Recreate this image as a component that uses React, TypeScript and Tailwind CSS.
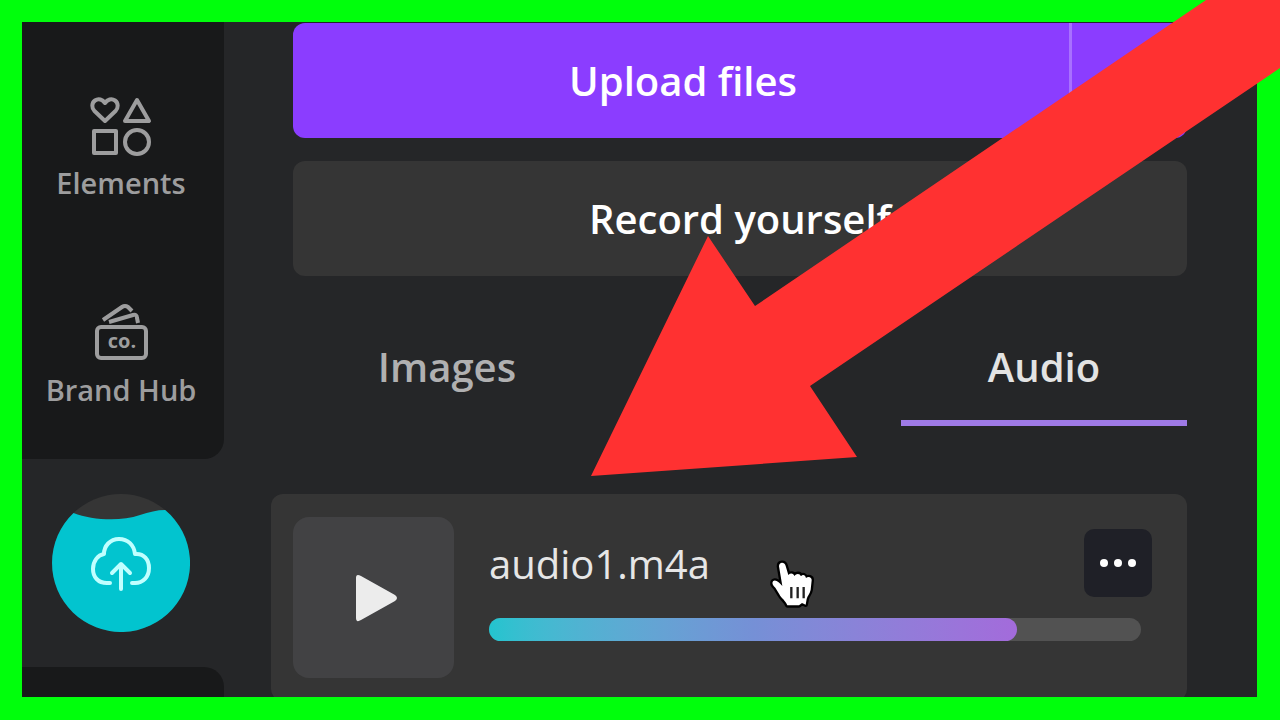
interface SidebarItemProps {
	label: string;
	children: React.ReactNode;
}

function SidebarItem({ label, children }: SidebarItemProps) {
	return (
		<button
			type="button"
			className="flex w-full flex-col items-center gap-2 text-[29px] leading-9 font-semibold text-[#9d9d9e]"
		>
			{children}
			<span className="whitespace-nowrap">{label}</span>
		</button>
	);
}

function ElementsIcon() {
	return (
		<svg
			width="64"
			height="64"
			viewBox="0 0 64 64"
			fill="none"
			stroke="currentColor"
			strokeWidth="4"
			strokeLinejoin="round"
		>
			<path d="M16 28 L5.5 18 C2.5 15 2.5 10 6 7.5 C9.5 5 13.5 6.5 16 10 C18.5 6.5 22.5 5 26 7.5 C29.5 10 29.5 15 26.5 18 Z" />
			<path d="M48 7 L60 28 H36 Z" />
			<rect x="5" y="38" width="22" height="22" />
			<circle cx="48" cy="49" r="12" />
		</svg>
	);
}

function BrandIcon() {
	return (
		<svg width="64" height="64" viewBox="0 0 64 64" fill="none" stroke="currentColor">
			<rect x="8" y="27" width="49" height="31" rx="4" strokeWidth="4" />
			<path
				d="M14 20 L33 7 Q36 5 39 7 L43 11"
				strokeWidth="4"
				strokeLinejoin="round"
			/>
			<path d="M20 22 L44 15 Q48 14 48 18 L49 23" strokeWidth="4" />
			<text
				x="33"
				y="48"
				textAnchor="middle"
				fontSize="20"
				fontWeight="700"
				fill="currentColor"
				stroke="none"
			>
				co.
			</text>
		</svg>
	);
}

function UploadsIcon() {
	return (
		<svg width="138" height="138" viewBox="0 0 138 138">
			<circle cx="69" cy="69" r="69" fill="#353535" />
			<path
				d="M21.5 19 C40 26 68 28 88 21 C97 18 105 16 113.2 16 A69 69 0 1 1 21.5 19 Z"
				fill="#02c4cf"
			/>
			<g
				fill="none"
				stroke="#c0ffff"
				strokeWidth="4"
				strokeLinecap="round"
				strokeLinejoin="round"
			>
				<path d="M58 89 H55 C46 89 41 83 41 75 C41 67 46 61 52 60 C52 52 58 45 67 45 C76 45 82 51 83 60 C92 59 97 66 97 74 C97 83 91 89 83 89 H80" />
				<path d="M69 95 V71 M60 79 L69 70 L78 79" />
			</g>
		</svg>
	);
}

function Sidebar() {
	return (
		<nav className="flex w-[202px] shrink-0 flex-col">
			<div className="flex flex-col gap-[99px] rounded-br-[20px] bg-[#18191a] pt-[71px] pr-1 pb-[51px]">
				<SidebarItem label="Elements">
					<ElementsIcon />
				</SidebarItem>
				<SidebarItem label="Brand Hub">
					<BrandIcon />
				</SidebarItem>
			</div>
			<button type="button" aria-label="Uploads" className="my-[35px] flex justify-center pr-1">
				<UploadsIcon />
			</button>
			<div className="grow rounded-tr-[20px] bg-[#18191a]" />
		</nav>
	);
}

function AudioCard() {
	return (
		<div className="mt-[68px] flex h-[207px] shrink-0 gap-[35px] rounded-xl bg-[#353535] py-[23px] pr-[46px] pl-[22px]">
			<button
				type="button"
				aria-label="Play"
				className="flex size-[161px] shrink-0 items-center justify-center rounded-2xl bg-[#424244]"
			>
				<svg width="48" height="48" viewBox="0 0 48 48" className="text-[#ececec]">
					<path
						d="M6 4 Q6 -1 11 2 L45 21 Q49 24 45 27 L11 46 Q6 49 6 44 Z"
						fill="currentColor"
					/>
				</svg>
			</button>
			<div className="min-w-0 grow">
				<div className="flex items-start justify-between pt-3">
					<p className="text-[40px] leading-[70px] text-[#e6e6e6]">audio1.m4a</p>
					<button
						type="button"
						aria-label="More options"
						className="-mr-[11px] flex size-[68px] items-center justify-center gap-[6px] rounded-[10px] bg-[#1f2027]"
					>
						<span className="size-2 rounded-full bg-white" />
						<span className="size-2 rounded-full bg-white" />
						<span className="size-2 rounded-full bg-white" />
					</button>
				</div>
				<div className="mt-[19px] h-[23px] rounded-full bg-[#525252]">
					<div className="h-full w-[81%] rounded-full bg-linear-to-r from-[#22c4cf] via-[#7590d6] to-[#a36bdb]" />
				</div>
			</div>
		</div>
	);
}

function Overlay() {
	return (
		<svg
			viewBox="0 0 1280 720"
			preserveAspectRatio="none"
			className="pointer-events-none absolute inset-0 h-full w-full"
		>
			<path
				d="M591 476 L708 236 L755 306 L1206 0 H1280 V68 L810 386 L857 457 Z"
				fill="#ff3131"
			/>
			{/* hand cursor */}
			<g transform="translate(760 551) scale(0.3333)">
				<path
					d="M57 46 C57 32 74 32 77 45 L85 72 C92 65 101 67 103 75 C109 66 120 67 123 76 C128 69 136 72 138 81 C145 75 156 79 155 88 L152 116 C150 128 142 134 140 144 L137 161 L126 156 L117 163 L82 163 C76 148 64 142 58 130 L46 110 C38 103 35 97 39 91 C46 84 58 94 67 105 Z"
					fill="#fff"
					stroke="#000"
					strokeWidth="14"
					strokeLinejoin="round"
					paintOrder="stroke"
				/>
				<path d="M94 108 V142 M113 108 V142 M131 108 V142" stroke="#222" strokeWidth="7" />
			</g>
		</svg>
	);
}

export default function App() {
	return (
		<div className="relative h-screen overflow-hidden bg-[#00ff0c] pt-[22px] pr-[23px] pb-[23px] pl-[22px] font-['Open_Sans',sans-serif]">
			<div className="flex h-full overflow-hidden bg-[#252628]">
				<Sidebar />
				<main className="flex min-w-0 grow flex-col pr-[70px] pl-[47px]">
					<div className="ml-[22px] flex shrink-0 flex-col gap-[23px] pt-px">
						<div className="flex h-[115px] overflow-hidden rounded-xl bg-[#8b3dff] text-[40px] font-semibold text-white">
							<button type="button" className="grow pl-1">
								Upload files
							</button>
							<button
								type="button"
								aria-label="More upload options"
								className="w-[118px] border-l-3 border-[#a870ff]"
							/>
						</div>
						<button
							type="button"
							className="h-[115px] rounded-xl bg-[#353535] text-[40px] font-semibold text-white"
						>
							Record yourself
						</button>
					</div>
					<div className="mt-[35px] ml-[22px] flex h-[115px] shrink-0 justify-between text-[40px] font-semibold">
						<button
							type="button"
							className="w-[34%] border-b-6 border-transparent pt-0.5 pl-1 text-[#b0b0b1]"
						>
							Images
						</button>
						<button
							type="button"
							className="w-[32%] border-b-6 border-[#9f7ae6] pt-0.5 text-[#e3e3e3]"
						>
							Audio
						</button>
					</div>
					<AudioCard />
				</main>
			</div>
			<Overlay />
		</div>
	);
}
